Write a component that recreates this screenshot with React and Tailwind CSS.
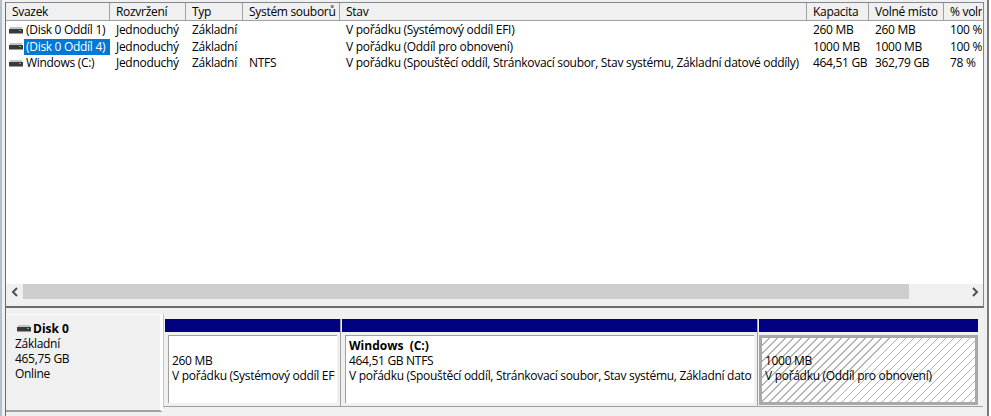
const font = { fontFamily: '"Open Sans", "Noto Sans", sans-serif' };

const cols = [
  { name: 'Svazek', w: 'w-[104px]' },
  { name: 'Rozvržení', w: 'w-[76px]' },
  { name: 'Typ', w: 'w-[57px]' },
  { name: 'Systém souborů', w: 'w-[97px]' },
  { name: 'Stav', w: 'w-[467px]' },
  { name: 'Kapacita', w: 'w-[62px]' },
  { name: 'Volné místo', w: 'w-[75px]' },
  { name: '% voln', w: 'w-[38px]' },
];

const rows = [
  ['(Disk 0 Oddíl 1)', 'Jednoduchý', 'Základní', '', 'V pořádku (Systémový oddíl EFI)', '260 MB', '260 MB', '100 %'],
  ['(Disk 0 Oddíl 4)', 'Jednoduchý', 'Základní', '', 'V pořádku (Oddíl pro obnovení)', '1000 MB', '1000 MB', '100 %'],
  ['Windows (C:)', 'Jednoduchý', 'Základní', 'NTFS', 'V pořádku (Spouštěcí oddíl, Stránkovací soubor, Stav systému, Základní datové oddíly)', '464,51 GB', '362,79 GB', '78 %'],
];

const rowH = ['h-[16px]', 'h-[17px]', 'h-[16px]'];

function Drive() {
  return (
    <svg width="14" height="7" viewBox="0 0 14 7" className="shrink-0" shapeRendering="crispEdges">
      <rect x="1" y="0" width="12" height="2" fill="#c4c4c4" />
      <rect x="0" y="2" width="14" height="4" fill="#3a3a3a" />
      <rect x="10" y="3" width="2" height="1" fill="#2fd24a" />
      <rect x="0" y="6" width="14" height="1" fill="#9a9a9a" />
    </svg>
  );
}

function Chevron({ right }) {
  return (
    <svg width="8" height="10" viewBox="0 0 8 10" fill="none" stroke="#505050" strokeWidth="2">
      <path d={right ? 'M2 1l4 4-4 4' : 'M6 1L2 5l4 4'} />
    </svg>
  );
}

function Partition({ w, title, lines, hatch }) {
  return (
    <div className={`${w} h-full flex flex-col shrink-0 ${hatch ? '' : 'border-r border-[#a0a0a0]'}`}>
      <div className="h-[13px] bg-[#000080] shrink-0" />
      <div className={hatch
        ? 'mt-[3px] h-[70px] border-[3px] border-[#a8a8a8] pl-[3px] bg-white bg-[repeating-linear-gradient(135deg,#ffffff_0px,#ffffff_4.9px,#b4b4b4_4.9px,#b4b4b4_5.66px)]'
        : 'mt-[3px] h-[68px] bg-white border-t border-l border-[#a0a0a0] mx-[3px] pl-[3px] pr-[2px] pt-[2px] overflow-hidden'}>
        <div className="h-[15px] text-[12px] leading-[15px] font-bold whitespace-pre">{title}</div>
        {lines.map((l) => (
          <div key={l} className="h-[15px] text-[12px] leading-[15px] whitespace-nowrap overflow-hidden tracking-[-0.3px]">{l}</div>
        ))}
      </div>
    </div>
  );
}

export default function App() {
  return (
    <div style={font} className="w-[989px] h-[416px] bg-[#f0f0f0] text-black overflow-hidden border-r-2 border-r-[#7a7a7a]">
      <div className="h-[416px] pl-[3px] pt-[2px] bg-[#f0f0f0] border-l-2 border-l-[#b4c0cc]">
        <div className="h-[414px] border-l border-[#6d6d6d]">
          <div className="h-[306px] w-[978px] border-t border-r border-[#828790] bg-white flex flex-col border-b-2 border-b-[#6d6d6d]">
            <div className="flex h-[18px] shrink-0 bg-[#f0f0f0] border-b border-[#a0a0a0]">
              {cols.map((c, i) => (
                <div key={c.name} className={`${c.w} shrink-0 ${i === 7 ? '' : 'border-r border-[#a0a0a0]'} pl-[6px] text-[12px] leading-[17px] whitespace-nowrap overflow-hidden tracking-[-0.3px]`}>
                  {c.name}
                </div>
              ))}
            </div>
            <div className="flex-1 pt-[1px] overflow-hidden">
              {rows.map((r, i) => (
                <div key={i} className={`flex items-center ${rowH[i]}`}>
                  {r.map((t, j) => (
                    <div key={j} className={`${cols[j].w} shrink-0 pl-[6px] text-[12px] leading-[16px] whitespace-nowrap overflow-hidden tracking-[-0.3px] flex items-center`}>
                      {j === 0 ? (
                        <>
                          <span className="mr-[1px] -ml-[3px]"><Drive /></span>
                          <span className={i === 1 ? 'flex-1 bg-[#0078d7] text-white pl-[2px]' : 'flex-1 pl-[2px]'}>{t}</span>
                        </>
                      ) : t}
                    </div>
                  ))}
                </div>
              ))}
            </div>
            <div className="shrink-0 pb-[7px] bg-[#f0f0f0]">
              <div className="h-[15px] flex">
                <div className="w-[17px] flex items-center justify-center"><Chevron /></div>
                <div className="w-[886px] bg-[#cdcdcd]" />
                <div className="flex-1" />
                <div className="w-[17px] flex items-center justify-center"><Chevron right /></div>
              </div>
            </div>
          </div>
          <div className="h-[6px]" />
          <div className="flex h-[98px]">
            <div className="w-[157px] h-[98px] bg-[#f0f0f0] border-t border-white border-r-[3px] border-r-white border-b-2 border-b-[#a0a0a0] shrink-0 pl-[9px] pt-[6px]">
              <div className="flex items-center h-[15px] pl-[2px] text-[12px] font-bold leading-[15px]"><Drive /><span className="ml-[2px]">Disk 0</span></div>
              <div className="h-[15px] text-[12px] leading-[15px] tracking-[-0.3px]">Základní</div>
              <div className="h-[15px] text-[12px] leading-[15px] tracking-[-0.3px]">465,75 GB</div>
              <div className="h-[15px] text-[12px] leading-[15px] tracking-[-0.3px]">Online</div>
            </div>
            <div className="flex pt-[5px] pl-[1px] h-[93px] gap-[1px] w-[820px] border-b border-[#a0a0a0] border-l border-l-[#c8c8c8]">
              <Partition w="w-[176px]" title="" lines={['260 MB', 'V pořádku (Systémový oddíl EFI)']} />
              <Partition w="w-[416px]" title="Windows  (C:)" lines={['464,51 GB NTFS', 'V pořádku (Spouštěcí oddíl, Stránkovací soubor, Stav systému, Základní datové oddíly)']} />
              <Partition w="w-[219px]" hatch title="" lines={['1000 MB', 'V pořádku (Oddíl pro obnovení)']} />
            </div>
          </div>
        </div>
      </div>
    </div>
  );
}
